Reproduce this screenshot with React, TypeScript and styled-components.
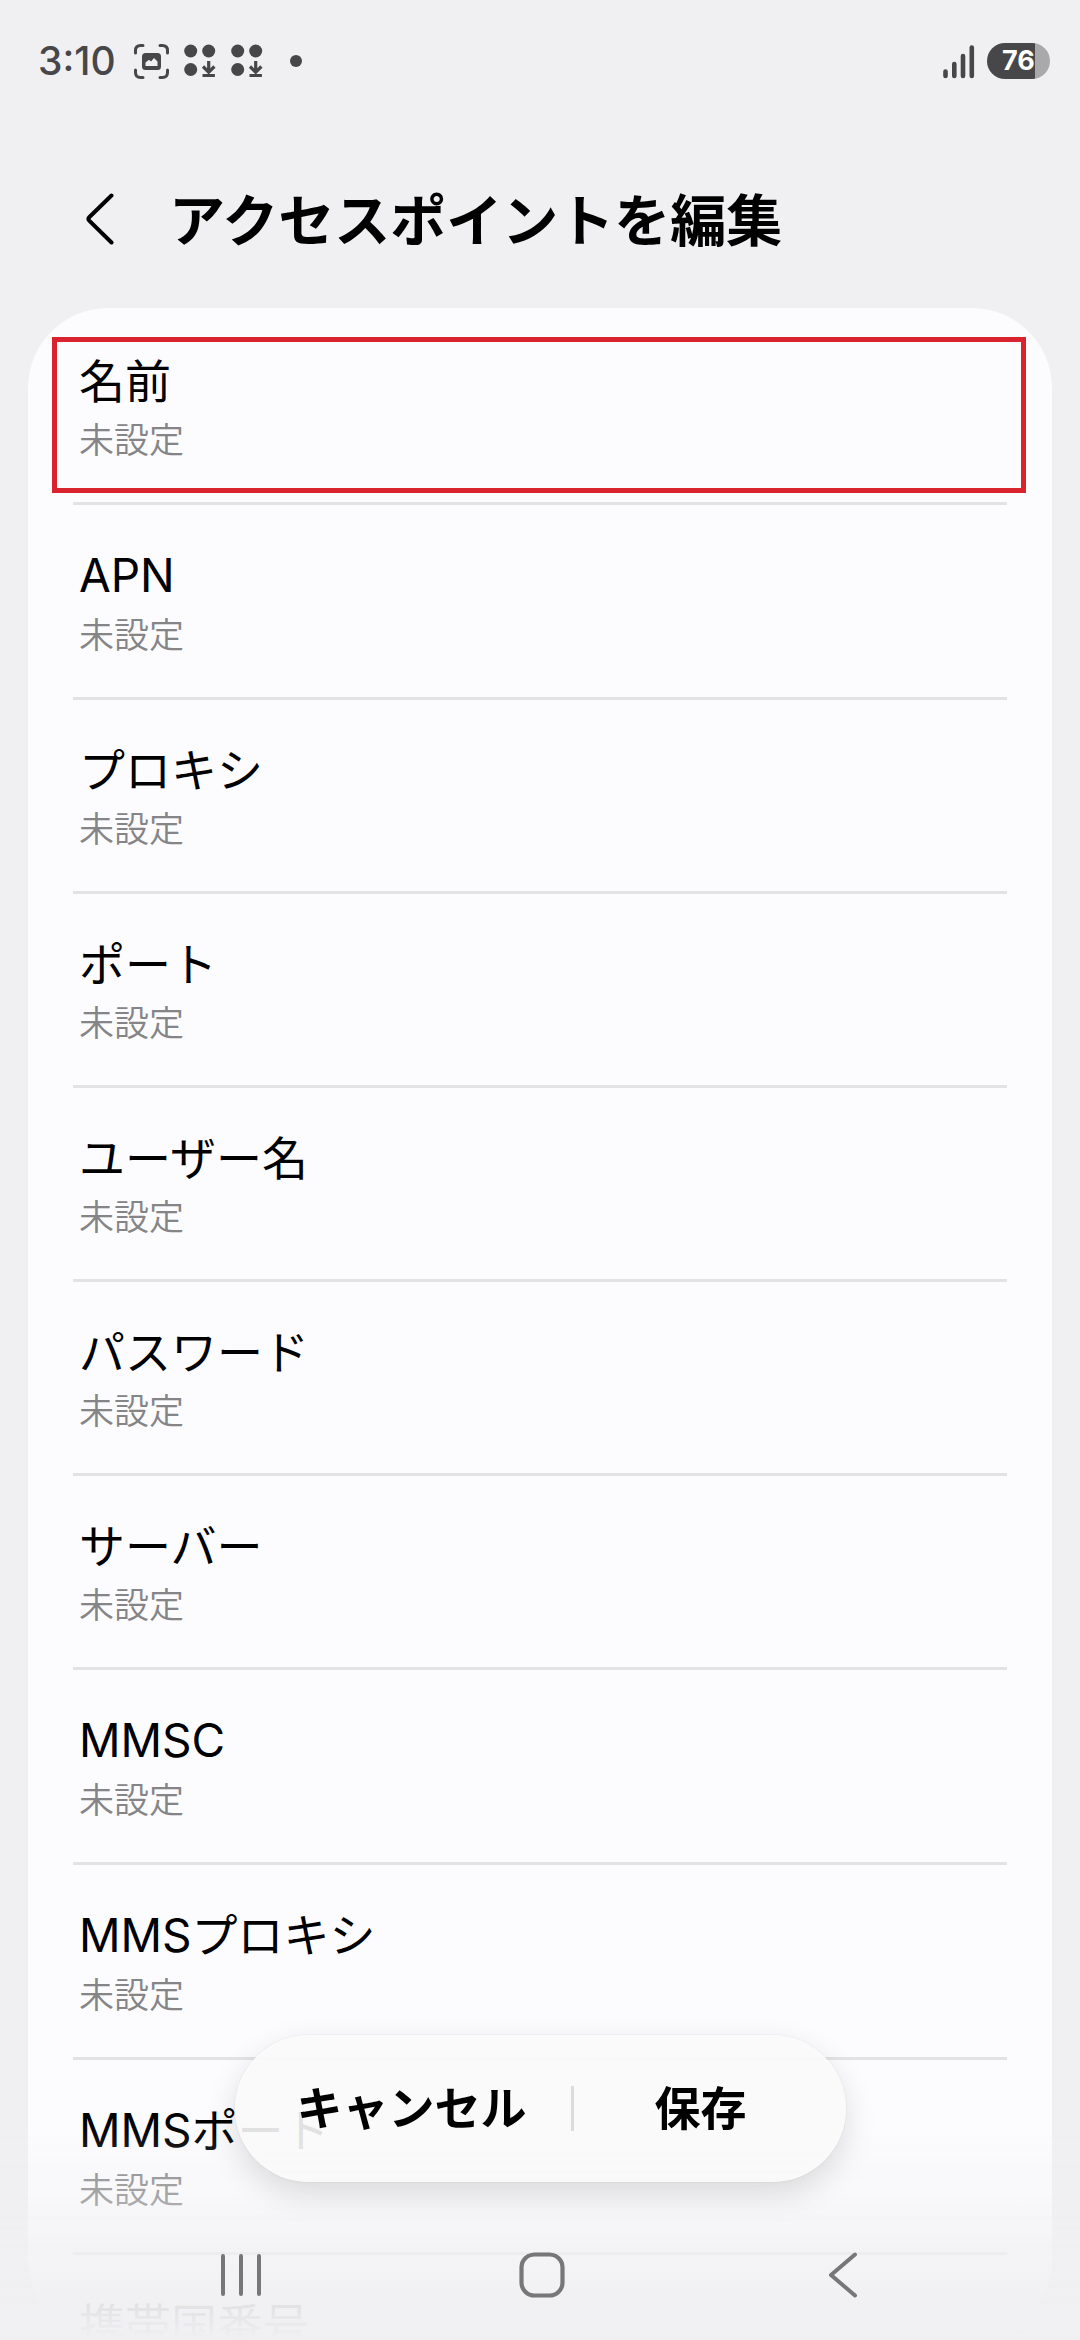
import React from "react";
import styled, { createGlobalStyle } from "styled-components";

const GlobalStyle = createGlobalStyle`
  *, *::before, *::after { box-sizing: border-box; }
  body {
    margin: 0;
    background: #f0f0f2;
    color: #000;
    font-family: Inter, "Noto Sans CJK JP", sans-serif;
  }
  button {
    margin: 0;
    padding: 0;
    border: 0;
    background: none;
    color: inherit;
    font: inherit;
    cursor: pointer;
  }
`;

const Screen = styled.div`
  display: flex;
  flex-direction: column;
  height: 100vh;
  overflow: hidden;
`;

const StatusBar = styled.div`
  display: flex;
  flex: none;
  align-items: center;
  justify-content: space-between;
  height: 122px;
  padding: 0 30px 0 38px;
  color: #474749;
`;

const StatusGroup = styled.div<{ $gap: number }>`
  display: flex;
  align-items: center;
  gap: ${(p) => p.$gap}px;
`;

const Time = styled.span`
  margin-right: 3px;
  font-size: 39px;
  font-weight: 550;
  line-height: 48px;
`;

const MoreDot = styled.span`
  width: 12px;
  height: 12px;
  margin-left: 12px;
  border-radius: 50%;
  background: currentColor;
`;

const Battery = styled.span`
  display: flex;
  align-items: center;
  justify-content: center;
  width: 63px;
  height: 36px;
  border-radius: 18px;
  background: linear-gradient(to right, #474749 76%, #a9a9ab 76%);
  color: #fff;
  font-size: 27px;
  font-weight: 700;
  line-height: 36px;
`;

const Header = styled.header`
  display: flex;
  flex: none;
  align-items: center;
  height: 186px;
  padding: 8px 60px 0 70px;
`;

const BackButton = styled.button`
  display: flex;
  align-items: center;
  justify-content: center;
  width: 60px;
  height: 72px;
  margin-right: 39px;
`;

const Title = styled.h1`
  margin: 0;
  padding-top: 4px;
  font-size: 56px;
  font-weight: 700;
  line-height: 72px;
`;

const Card = styled.main`
  flex: 1;
  min-height: 0;
  margin: 0 28px;
  padding-top: 3px;
  overflow-y: auto;
  scrollbar-width: none;
  border-radius: 80px;
  background: #fcfcfe;
`;

const List = styled.ul`
  margin: 0;
  padding: 0;
  list-style: none;
`;

const Item = styled.li<{ $marked: boolean }>`
  position: relative;

  &::before {
    content: "";
    display: ${(p) => (p.$marked ? "block" : "none")};
    position: absolute;
    top: 26px;
    right: 26px;
    bottom: 12px;
    left: 24px;
    border: 5px solid #d9232e;
    pointer-events: none;
  }

  &::after {
    content: "";
    display: block;
    height: 3px;
    margin: 0 45px;
    background: #e3e3e6;
  }
`;

const Row = styled.button`
  display: block;
  width: 100%;
  padding: 39px 51px 34px;
  text-align: left;
`;

const Label = styled.span<{ $latin: boolean }>`
  display: block;
  font-size: 46px;
  font-weight: 400;
  line-height: ${(p) => (p.$latin ? 63 : 62)}px;
`;

const Value = styled.span`
  display: block;
  color: #858587;
  font-size: 35px;
  font-weight: 350;
  line-height: 56px;
`;

const Dock = styled.div`
  position: fixed;
  right: 0;
  bottom: 0;
  left: 0;
  display: flex;
  flex-direction: column;
  align-items: center;
  background: linear-gradient(
    to bottom,
    rgba(240, 240, 242, 0) 90px,
    rgba(240, 240, 242, 0.3) 160px,
    rgba(240, 240, 242, 0.75) 220px,
    rgba(240, 240, 242, 0.94) 270px,
    rgba(240, 240, 242, 1) 304px
  );
`;

const ActionBar = styled.div`
  display: flex;
  align-items: center;
  height: 147px;
  padding: 0 18px;
  border-radius: 74px;
  background: rgba(249, 249, 251, 0.9);
  box-shadow: 0 0 2px rgba(0, 0, 0, 0.12), 0 12px 32px rgba(0, 0, 0, 0.13);
`;

const ActionButton = styled.button`
  min-width: 254px;
  height: 120px;
  padding: 0 44px 2px;
  font-size: 46px;
  font-weight: 700;
  line-height: 62px;
`;

const ActionDivider = styled.span`
  width: 3px;
  height: 45px;
  background: #dcdcde;
`;

const NavBar = styled.nav`
  display: grid;
  grid-template-columns: repeat(3, 28%);
  justify-content: center;
  width: 100%;
  margin-top: 27px;
  padding: 0 0 0 4px;
  height: 131px;
`;

const NavButton = styled.button`
  display: flex;
  align-items: center;
  justify-content: center;
  color: #777779;
`;

const CaptureIcon = () => (
  <svg width="35" height="35" viewBox="0 0 35 35" fill="none" aria-hidden="true">
    <path
      d="M1.5 9V6.500Q1.500 1.500 6.500 1.500H9M26 1.500h2.500q5 0 5 5V9M33.500 26v2.500q0 5-5 5H26M9 33.500H6.500q-5 0-5-5V26"
      stroke="currentColor"
      strokeWidth="3"
      strokeLinecap="round"
    />
    <rect x="8" y="9" width="19" height="17" rx="3.500" fill="currentColor" />
    <path
      d="M11.500 22v-3.500l3.500-2.800 2 1.800 3-3.500 3.500 3.500V22z"
      fill="#f0f0f2"
    />
  </svg>
);

const InstallIcon = () => (
  <svg width="32" height="34" viewBox="0 0 32 34" fill="none" aria-hidden="true">
    <circle cx="6.700" cy="7" r="6.500" fill="currentColor" />
    <circle cx="24.700" cy="7" r="6.500" fill="currentColor" />
    <circle cx="6.700" cy="25.500" r="6.500" fill="currentColor" />
    <path
      d="M24.700 17v11M19 22.500l5.700 5.700 5.700-5.700M18.500 31.500h12.400"
      stroke="currentColor"
      strokeWidth="3.200"
    />
  </svg>
);

const SignalIcon = () => (
  <svg width="32" height="35" viewBox="0 0 32 35" aria-hidden="true">
    <path
      d="M2.500 27.500v4.500M11.300 20v12M20 12v20M28.800 3.500v28.500"
      stroke="currentColor"
      strokeWidth="4.600"
      strokeLinecap="round"
    />
  </svg>
);

const BackIcon = () => (
  <svg width="28" height="52" viewBox="0 0 28 52" fill="none" aria-hidden="true">
    <path
      d="M25.500 2.500 3.200 24.300q-1.700 1.700 0 3.400L25.500 49.500"
      stroke="currentColor"
      strokeWidth="4"
      strokeLinecap="round"
    />
  </svg>
);

const RecentsIcon = () => (
  <svg width="42" height="44" viewBox="0 0 42 44" aria-hidden="true">
    <path
      d="M3 3v38M21 3v38M39 3v38"
      stroke="currentColor"
      strokeWidth="4"
      strokeLinecap="round"
    />
  </svg>
);

const HomeIcon = () => (
  <svg width="46" height="46" viewBox="0 0 46 46" fill="none" aria-hidden="true">
    <rect x="2.500" y="2.500" width="41" height="41" rx="13" stroke="currentColor" strokeWidth="4.200" />
  </svg>
);

const NavBackIcon = () => (
  <svg width="30" height="46" viewBox="0 0 30 46" fill="none" aria-hidden="true">
    <path
      d="M27 2.500 3 23l24 20.500"
      stroke="currentColor"
      strokeWidth="4"
      strokeLinecap="round"
      strokeLinejoin="round"
    />
  </svg>
);

const fields = [
  "名前",
  "APN",
  "プロキシ",
  "ポート",
  "ユーザー名",
  "パスワード",
  "サーバー",
  "MMSC",
  "MMSプロキシ",
  "MMSポート",
  "携帯国番号",
];

export default function App() {
  return (
    <Screen lang="ja">
      <GlobalStyle />
      <StatusBar>
        <StatusGroup $gap={15}>
          <Time>3:10</Time>
          <CaptureIcon />
          <InstallIcon />
          <InstallIcon />
          <MoreDot />
        </StatusGroup>
        <StatusGroup $gap={12}>
          <SignalIcon />
          <Battery>76</Battery>
        </StatusGroup>
      </StatusBar>
      <Header>
        <BackButton aria-label="戻る">
          <BackIcon />
        </BackButton>
        <Title>アクセスポイントを編集</Title>
      </Header>
      <Card>
        <List>
          {fields.map((name, index) => (
            <Item key={name} $marked={index === 0}>
              <Row>
                <Label $latin={/[A-Z]/.test(name)}>{name}</Label>
                <Value>未設定</Value>
              </Row>
            </Item>
          ))}
        </List>
      </Card>
      <Dock>
        <ActionBar>
          <ActionButton>キャンセル</ActionButton>
          <ActionDivider />
          <ActionButton>保存</ActionButton>
        </ActionBar>
        <NavBar>
          <NavButton aria-label="履歴">
            <RecentsIcon />
          </NavButton>
          <NavButton aria-label="ホーム">
            <HomeIcon />
          </NavButton>
          <NavButton aria-label="戻る">
            <NavBackIcon />
          </NavButton>
        </NavBar>
      </Dock>
    </Screen>
  );
}
